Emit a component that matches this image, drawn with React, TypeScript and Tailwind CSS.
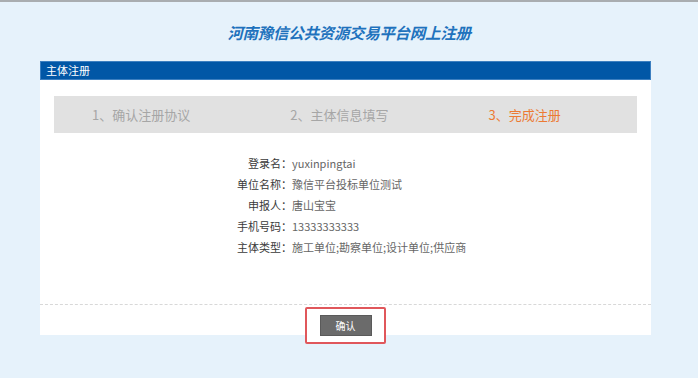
const font = "font-['Microsoft_YaHei','Noto_Sans_CJK_SC',sans-serif]";

const steps = [
  { label: "1、确认注册协议", active: false },
  { label: "2、主体信息填写", active: false },
  { label: "3、完成注册", active: true },
];

const info = [
  { label: "登录名：", value: "yuxinpingtai" },
  { label: "单位名称：", value: "豫信平台投标单位测试" },
  { label: "申报人：", value: "唐山宝宝" },
  { label: "手机号码：", value: "13333333333" },
  { label: "主体类型：", value: "施工单位;勘察单位;设计单位;供应商" },
];

export default function App() {
  return (
    <div
      className={`w-[698px] h-[378px] bg-[#e6f2fb] border-t-2 border-[#a9adb0] overflow-hidden ${font}`}
    >
      {/* 标题 */}
      <div className="h-[59px] flex items-center justify-center pt-[3px]">
        <h1 className="text-[15.5px] font-bold italic text-[#1f72bd] tracking-[-0.3px]">
          河南豫信公共资源交易平台网上注册
        </h1>
      </div>

      {/* 主体卡片 */}
      <div className="ml-[40px] w-[611px] bg-white">
        <div className="h-[19px] bg-[#0157a6] border border-[#3c7fc0] flex items-center pl-[5px] text-white text-[11px]">
          主体注册
        </div>

        <div className="px-[14px] pt-[16px]">
          <div className="h-[37px] bg-[#e1e1e1] flex items-center pl-[38px] gap-[100px] text-[13px]">
            {steps.map((s) => (
              <span
                key={s.label}
                className={s.active ? "text-[#ec7a34]" : "text-[#a6a6a6]"}
              >
                {s.label}
              </span>
            ))}
          </div>
        </div>

        <div className="pt-[23px] pb-[49px] flex flex-col gap-[6px] text-[11px]">
          {info.map((row) => (
            <div key={row.label} className="flex h-[15px] items-center">
              <span className="w-[252px] text-right text-[#3a3a3a]">
                {row.label}
              </span>
              <span className="text-[#666]">{row.value}</span>
            </div>
          ))}
        </div>

        <div className="border-t border-dashed border-[#d8d8d8] h-[31px] flex justify-center pt-[2px]">
          <div className="w-[81px] h-[37px] border-2 border-[#e0575b] rounded-[2px] flex items-center justify-center shrink-0 bg-white">
            <button className="w-[52px] h-[21px] bg-[#6b6b6b] text-white text-[10px] border border-[#5a5a5a]">
              确认
            </button>
          </div>
        </div>
      </div>
    </div>
  );
}
